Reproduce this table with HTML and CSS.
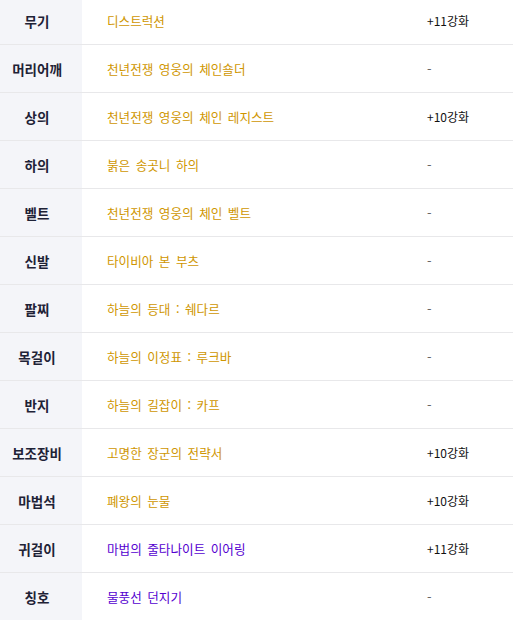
FILE: index.html
```html
<!DOCTYPE html>
<html lang="ko">
<head>
<meta charset="utf-8">
<link rel="stylesheet" href="styles.css">
</head>
<body>
<div class="equip">
  <div class="row"><div class="label">무기</div><div class="item gold">디스트럭션</div><div class="val">+11강화</div></div>
  <div class="row"><div class="label">머리어깨</div><div class="item gold">천년전쟁 영웅의 체인숄더</div><div class="val dash">-</div></div>
  <div class="row"><div class="label">상의</div><div class="item gold">천년전쟁 영웅의 체인 레지스트</div><div class="val">+10강화</div></div>
  <div class="row"><div class="label">하의</div><div class="item gold">붉은 송곳니 하의</div><div class="val dash">-</div></div>
  <div class="row"><div class="label">벨트</div><div class="item gold">천년전쟁 영웅의 체인 벨트</div><div class="val dash">-</div></div>
  <div class="row"><div class="label">신발</div><div class="item gold">타이비아 본 부츠</div><div class="val dash">-</div></div>
  <div class="row"><div class="label">팔찌</div><div class="item gold">하늘의 등대 : 쉐다르</div><div class="val dash">-</div></div>
  <div class="row"><div class="label">목걸이</div><div class="item gold">하늘의 이정표 : 루크바</div><div class="val dash">-</div></div>
  <div class="row"><div class="label">반지</div><div class="item gold">하늘의 길잡이 : 카프</div><div class="val dash">-</div></div>
  <div class="row"><div class="label">보조장비</div><div class="item gold">고명한 장군의 전략서</div><div class="val">+10강화</div></div>
  <div class="row"><div class="label">마법석</div><div class="item gold">폐왕의 눈물</div><div class="val">+10강화</div></div>
  <div class="row"><div class="label">귀걸이</div><div class="item purple">마법의 줄타나이트 이어링</div><div class="val">+11강화</div></div>
  <div class="row"><div class="label">칭호</div><div class="item purple">물풍선 던지기</div><div class="val dash">-</div></div>
</div>
</body>
</html>
```
FILE: styles.css
```css
html, body {
  margin: 0;
  padding: 0;
  background: #ffffff;
}
body {
  font-family: "Noto Sans CJK KR", "Noto Sans", sans-serif;
  font-size: 12px;
  overflow: hidden;
}
.equip {
  margin-top: -3px;
  display: flex;
  flex-direction: column;
}
.row {
  display: grid;
  grid-template-columns: 82px 1fr 86px;
  height: 47px;
  border-bottom: 1px solid #e8e8ea;
}
.label {
  background: #f4f5f9;
  color: #1e2236;
  font-weight: bold;
  font-size: 13.5px;
  display: flex;
  align-items: center;
  justify-content: center;
  padding-right: 8px;
}
.item {
  display: flex;
  align-items: center;
  padding-left: 25px;
  font-size: 12.6px;
  word-spacing: 2px;
}
.gold { color: #cf9600; }
.purple { color: #5500d0; }
.val {
  display: flex;
  align-items: center;
  color: #111111;
}
.dash { color: #666666; font-size: 13px; }
```
